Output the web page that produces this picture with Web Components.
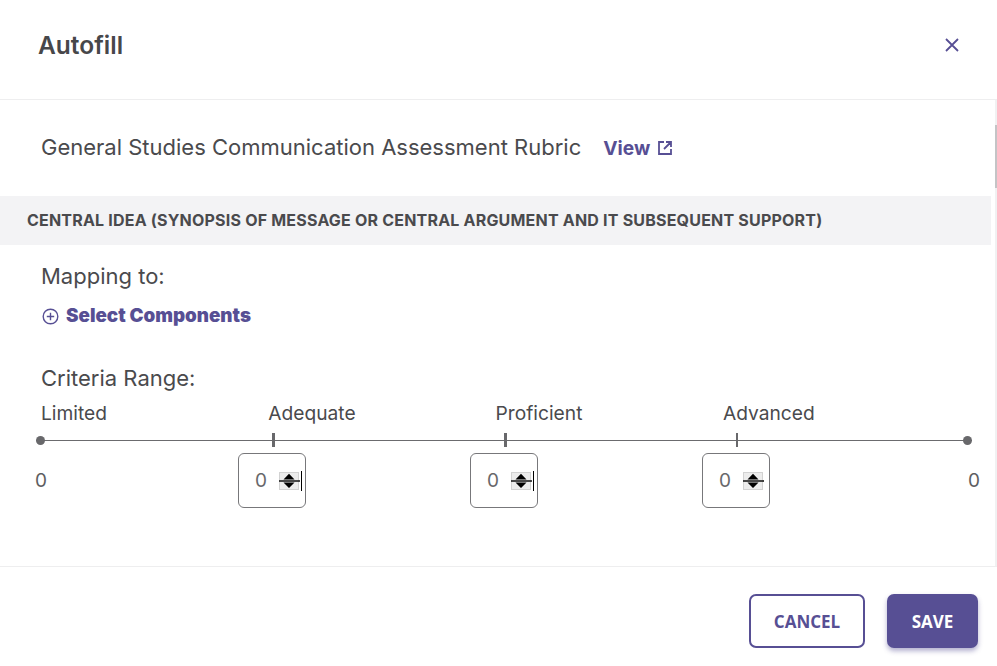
<!DOCTYPE html>
<html>
<head>
<meta charset="utf-8">
<title>Autofill</title>
<style>
    html, body { margin: 0; height: 100%; background: #fff; }
    body { font-family: Inter, "Liberation Sans", sans-serif; color: #4a4a4d; overflow: hidden; }
</style>
</head>
<body>
<autofill-modal>
    <span slot="title">Autofill</span>
    <rubric-title>General Studies Communication Assessment Rubric</rubric-title>
    <section-band>CENTRAL IDEA (SYNOPSIS OF MESSAGE OR CENTRAL ARGUMENT AND IT SUBSEQUENT SUPPORT)</section-band>
    <component-picker></component-picker>
    <criteria-range></criteria-range>
    <action-button slot="footer" kind="outline">CANCEL</action-button>
    <action-button slot="footer" kind="solid">SAVE</action-button>
</autofill-modal>

<script>
class AutofillModal extends HTMLElement {
    constructor() {
        super();
        this.attachShadow({ mode: 'open' });
        this.shadowRoot.innerHTML = `
            <style>
                :host {
                    display: grid;
                    grid-template-rows: 100px 467px 99px;
                    height: 666px;
                }
                header {
                    display: flex;
                    align-items: center;
                    justify-content: space-between;
                    padding: 0 37px 9px 38px;
                    border-bottom: 1px solid #eeeeef;
                    font-size: 24.5px;
                    font-weight: 600;
                    color: #47474a;
                }
                svg { display: block; }
                main {
                    display: flex;
                    overflow: hidden;
                    border-bottom: 1px solid #eeeeef;
                }
                .content { flex: 1; min-width: 0; padding-right: 4px; }
                .scrollbar {
                    width: 2px;
                    padding-top: 25px;
                    background: #f1f1f2;
                }
                .scrollbar div { height: 63px; background: #c4c4c6; }
                footer {
                    display: flex;
                    justify-content: flex-end;
                    gap: 22px;
                    padding: 27px 19px 0 0;
                }
            </style>
            <header>
                <slot name="title"></slot>
                <svg width="16" height="16" viewBox="0 0 16 16" fill="none" stroke="#574f94" stroke-width="1.8">
                    <path d="M2 2 14 14M14 2 2 14"/>
                </svg>
            </header>
            <main>
                <div class="content"><slot></slot></div>
                <div class="scrollbar"><div></div></div>
            </main>
            <footer><slot name="footer"></slot></footer>
        `;
    }
}

class RubricTitle extends HTMLElement {
    constructor() {
        super();
        this.attachShadow({ mode: 'open' });
        this.shadowRoot.innerHTML = `
            <style>
                :host {
                    display: flex;
                    align-items: center;
                    box-sizing: border-box;
                    height: 96px;
                    padding: 0 0 2px 41px;
                    font-size: 22px;
                    color: #4a4a4d;
                }
                a {
                    display: flex;
                    align-items: center;
                    gap: 7px;
                    margin: 2px 0 0 22px;
                    font-size: 19.2px;
                    font-weight: 700;
                    color: #574f94;
                }
            </style>
            <slot></slot>
            <a>View
                <svg width="16" height="16" viewBox="0 0 16 16" fill="none" stroke="#574f94" stroke-width="1.8">
                    <path d="M7 2H2V14H14V9M9 2H14V7M14 2 7 9"/>
                </svg>
            </a>
        `;
    }
}

class SectionBand extends HTMLElement {
    constructor() {
        super();
        this.attachShadow({ mode: 'open' });
        this.shadowRoot.innerHTML = `
            <style>
                :host {
                    display: flex;
                    align-items: center;
                    box-sizing: border-box;
                    height: 49px;
                    padding: 0 0 2px 27px;
                    background: #f3f3f5;
                    font-size: 16px;
                    letter-spacing: 0.2px;
                    font-weight: 700;
                    color: #4a4a4d;
                }
            </style>
            <slot></slot>
        `;
    }
}

class ComponentPicker extends HTMLElement {
    constructor() {
        super();
        this.attachShadow({ mode: 'open' });
        this.shadowRoot.innerHTML = `
            <style>
                :host {
                    display: block;
                    padding: 18px 0 0 41px;
                    height: 120px;
                    box-sizing: border-box;
                }
                .label { font-size: 22px; line-height: 26px; }
                a {
                    display: flex;
                    align-items: center;
                    gap: 7px;
                    margin: 14px 0 0 1px;
                    font-size: 18.8px;
                    font-weight: 900;
                    line-height: 26px;
                    color: #574f94;
                }
            </style>
            <div class="label">Mapping to:</div>
            <a>
                <svg width="17" height="17" viewBox="0 0 17 17" fill="none" stroke="#574f94" stroke-width="1.4">
                    <circle cx="8.5" cy="8.5" r="7.3"/>
                    <path d="M8.5 4.8V12.2M4.8 8.5H12.2"/>
                </svg>
                Select Components
            </a>
        `;
    }
}

class RangeInput extends HTMLElement {
    constructor() {
        super();
        this.attachShadow({ mode: 'open' });
        this.shadowRoot.innerHTML = `
            <style>
                :host {
                    display: flex;
                    align-items: center;
                    width: 68px;
                    height: 55px;
                    box-sizing: border-box;
                    padding-left: 16px;
                    border: 1px solid #77777a;
                    border-radius: 6px;
                    font-size: 19px;
                    color: #68686b;
                }
                span { width: 12px; }
                svg { display: block; margin-left: 12px; }
            </style>
            <span>0</span>
            <svg width="23" height="20" viewBox="0 0 23 20">
                <rect x="0.5" y="1.5" width="19" height="17" fill="#ececec" stroke="#d2d2d2"/>
                <path d="M10 2.8 15.5 8.6H4.5Z M10 17 4.5 11.6H15.5Z" fill="#000"/>
                <path d="M0 10H21" stroke="#000" stroke-width="1.4"/>
                ${this.hasAttribute('edge') ? '<path d="M22.5 0V20" stroke="#000"/>' : ''}
            </svg>
        `;
    }
}

class CriteriaRange extends HTMLElement {
    constructor() {
        super();
        this.attachShadow({ mode: 'open' });
        this.shadowRoot.innerHTML = `
            <style>
                :host {
                    display: block;
                    padding-left: 41px;
                }
                .heading { font-size: 22px; line-height: 26px; }
                .labels {
                    display: grid;
                    grid-template-columns: repeat(4, 227.3px);
                    margin-top: 10px;
                    font-size: 19.2px;
                    line-height: 24px;
                }
                .track {
                    display: flex;
                    align-items: center;
                    width: 936px;
                    height: 16px;
                    margin: 7px 0 0 -5px;
                    background: linear-gradient(#6b6b6e, #6b6b6e) center / 100% 1px no-repeat;
                }
                .dot { width: 9px; height: 9px; border-radius: 50%; background: #68686b; }
                .tick { width: 3px; height: 14px; background: #68686b; margin-left: 229px; }
                .tick.first { margin-left: 227px; }
                .tick.thin { width: 2px; }
                .dot.last { margin-left: 225px; }
                .values {
                    display: grid;
                    grid-template-columns: 203px 232px 232px 1fr;
                    align-items: center;
                    width: 945px;
                    margin: 5px 0 0 -6px;
                    font-size: 19px;
                    color: #5e5e61;
                }
                .last-cell {
                    display: flex;
                    justify-content: space-between;
                    align-items: center;
                }
            </style>
            <div class="heading">Criteria Range:</div>
            <div class="labels">
                <span>Limited</span><span>Adequate</span><span>Proficient</span><span>Advanced</span>
            </div>
            <div class="track">
                <i class="dot"></i><i class="tick first"></i><i class="tick"></i><i class="tick thin"></i><i class="dot last"></i>
            </div>
            <div class="values">
                <span>0</span>
                <div><range-input edge></range-input></div>
                <div><range-input edge></range-input></div>
                <div class="last-cell">
                    <range-input></range-input><span>0</span>
                </div>
            </div>
        `;
    }
}

class ActionButton extends HTMLElement {
    constructor() {
        super();
        this.attachShadow({ mode: 'open' });
        this.shadowRoot.innerHTML = `
            <style>
                :host {
                    display: flex;
                    align-items: center;
                    justify-content: center;
                    box-sizing: border-box;
                    height: 54px;
                    border-radius: 7px;
                    font-family: "Open Sans", sans-serif;
                    font-size: 17px;
                    font-weight: 700;
                }
                :host([kind="outline"]) {
                    width: 116px;
                    border: 2px solid #574f94;
                    color: #574f94;
                    background: #fff;
                }
                :host([kind="solid"]) {
                    width: 91px;
                    color: #fff;
                    background: #574f94;
                    box-shadow: 0 3px 5px rgba(87, 79, 148, 0.45);
                }
            </style>
            <slot></slot>
        `;
    }
}

customElements.define('autofill-modal', AutofillModal);
customElements.define('rubric-title', RubricTitle);
customElements.define('section-band', SectionBand);
customElements.define('component-picker', ComponentPicker);
customElements.define('range-input', RangeInput);
customElements.define('criteria-range', CriteriaRange);
customElements.define('action-button', ActionButton);
</script>
</body>
</html>
